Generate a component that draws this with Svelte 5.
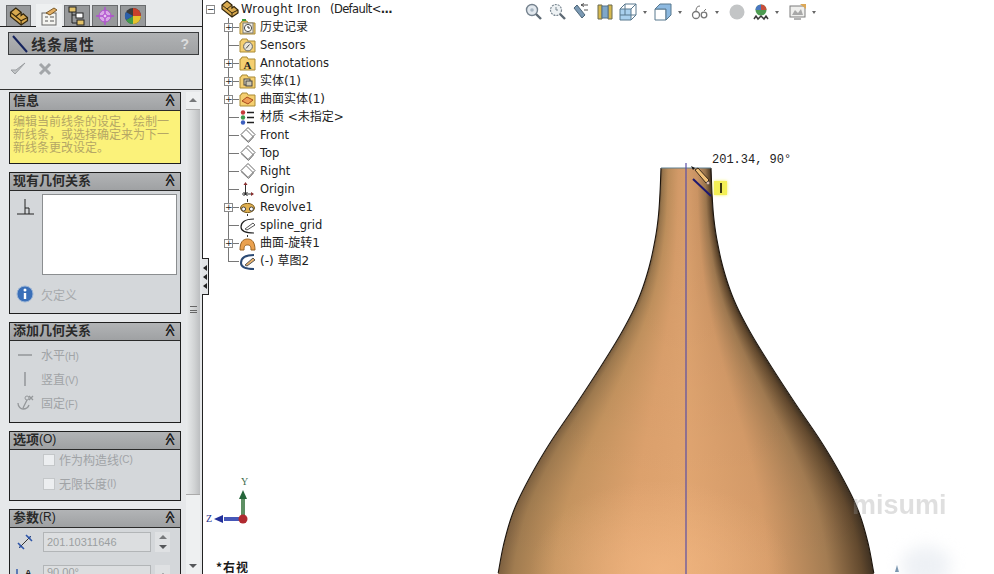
<script>
	// half width of the vase at a given height, read off the part
	const profile = [
		[168, 25], [193, 26], [217, 27.7], [240, 31], [270, 37.7], [300, 48], [330, 63],
		[363, 83], [403, 109], [443, 136], [477, 156], [510, 172], [543, 182], [574, 188]
	];

	function slope(i) {
		const a = profile[Math.max(i - 1, 0)];
		const b = profile[Math.min(i + 1, profile.length - 1)];
		return (b[1] - a[1]) / (b[0] - a[0]);
	}

	// hermite curve through the points so the outline stays smooth
	function halfWidth(y) {
		for (let i = 1; i < profile.length; i++) {
			const [y0, w0] = profile[i - 1];
			const [y1, w1] = profile[i];
			if (y <= y1) {
				const h = y1 - y0;
				const t = (y - y0) / h;
				const t2 = t * t;
				const t3 = t2 * t;
				return (
					(2 * t3 - 3 * t2 + 1) * w0 +
					(t3 - 2 * t2 + t) * h * slope(i - 1) +
					(-2 * t3 + 3 * t2) * w1 +
					(t3 - t2) * h * slope(i)
				);
			}
		}
		return 188;
	}

	const rows = [];
	for (let y = 168; y < 574; y++) rows.push({ y, w: halfWidth(y) });

	const outline = rows.map((r) => `${686 - r.w},${r.y}`).join(' ');
	const outlineRight = rows.map((r) => `${686 + r.w},${r.y}`).join(' ');

	const tree = [
		{ label: '历史记录', icon: 'history', open: true, cjk: true },
		{ label: 'Sensors', icon: 'sensors' },
		{ label: 'Annotations', icon: 'notes', open: true },
		{ label: '实体(1)', icon: 'solid', open: true, cjk: true },
		{ label: '曲面实体(1)', icon: 'surface', open: true, cjk: true },
		{ label: '材质 <未指定>', icon: 'material', cjk: true },
		{ label: 'Front', icon: 'plane' },
		{ label: 'Top', icon: 'plane' },
		{ label: 'Right', icon: 'plane' },
		{ label: 'Origin', icon: 'origin' },
		{ label: 'Revolve1', icon: 'revolve', open: true },
		{ label: 'spline_grid', icon: 'sketch' },
		{ label: '曲面-旋转1', icon: 'dome', open: true, cjk: true },
		{ label: '(-) 草图2', icon: 'sketch2', cjk: true }
	];
</script>

{#snippet folder()}
	<path d="M1 15V4h1l1-2h5l1 2h7v11z" fill="#f5cf70" stroke="#a98a35" />
{/snippet}

{#snippet partIcon()}
	<path d="M1 5l5-4 5 4v3l2-1.500 4 3.500v3l-6 4L1 9z" fill="#d8a94e" stroke="#33260c" stroke-width="1.200" />
	<path d="M1 5l10 8v4M11 13l6-3M6 9l5-4" fill="none" stroke="#33260c" />
{/snippet}

{#snippet treeIcon(kind)}
	<svg class="ticon" width="17" height="17" viewBox="0 0 17 17">
		{#if kind === 'history'}
			{@render folder()}
			<rect x="4" y="4" width="10" height="10" fill="#f8f4e6" stroke="#777" />
			<circle cx="9" cy="9" r="3.6" fill="#fff" stroke="#4c4c4c" />
			<path d="M9 7v2h2" fill="none" stroke="#333" />
			<path d="M3 1h4" stroke="#3e9a3e" stroke-width="2" />
		{:else if kind === 'sensors'}
			{@render folder()}
			<circle cx="9" cy="9.5" r="4.4" fill="#e9e6da" stroke="#666" />
			<path d="M7 11.5l3.5-4" stroke="#444" />
		{:else if kind === 'notes'}
			{@render folder()}
			<text x="4.4" y="13.6" class="glyph-a">A</text>
		{:else if kind === 'solid'}
			{@render folder()}
			<rect x="5" y="6" width="6" height="6" fill="#e4ddc4" stroke="#444" />
			<rect x="7" y="8" width="6" height="5" fill="#cfc8b0" stroke="#444" />
		{:else if kind === 'surface'}
			{@render folder()}
			<path d="M3 10l5-4 6 3-5 4z" fill="#ef9d55" stroke="#a6491d" />
		{:else if kind === 'material'}
			<circle cx="4" cy="3.5" r="2.2" fill="#c53a3a" />
			<circle cx="4" cy="8.5" r="2.2" fill="#3d9a4d" />
			<circle cx="4" cy="13.5" r="2.2" fill="#3c5fbf" />
			<path d="M8 3.5h7M8 8.5h7M8 13.5h7" stroke="#222" stroke-width="1.4" />
		{:else if kind === 'plane'}
			<path d="M9 .5l7 7-7 7-7-7z" fill="#fff" stroke="#666" />
			<path d="M7.500 3l7 7-5 5.500-7.500-7" fill="none" stroke="#777" />
		{:else if kind === 'origin'}
			<path d="M6.5 2v12" stroke="#333" />
			<path d="M6.5 1l-2 3h4z" fill="#8a3030" />
			<path d="M3 13h11" stroke="#333" />
			<path d="M15 13l-3-2v4z" fill="#8a3030" />
			<path d="M4.5 11l4 4M8.5 11l-4 4" stroke="#222" />
		{:else if kind === 'revolve'}
			<path d="M8.5 0v17" stroke="#333" stroke-dasharray="3 2" />
			<ellipse cx="8.5" cy="9" rx="7" ry="4.6" fill="#e0b050" stroke="#7a5a1a" />
			<circle cx="4.6" cy="10" r="2" fill="#fff" stroke="#444" />
			<circle cx="12.4" cy="10" r="2" fill="#fff" stroke="#444" />
		{:else if kind === 'sketch'}
			<path d="M15 2C5 2 2 6 2 10s3 6 13 6" fill="none" stroke="#222" stroke-width="1.2" />
			<path d="M6 12l8-6 2 2-8 5z" fill="#fff" stroke="#555" />
		{:else if kind === 'dome'}
			<path d="M8.5 0v3" stroke="#333" stroke-dasharray="2 1" />
			<path d="M1 15c0-8 3-11 7.500-11S16 7 16 15h-4c0-4-1-5-3.500-5S5 11 5 15z" fill="#eaa14f" stroke="#9a6322" />
		{:else if kind === 'sketch2'}
			<path d="M15 2C5 2 2 6 2 10s3 6 13 6" fill="none" stroke="#2b4a74" stroke-width="2" />
			<path d="M6 12l8-7 2 2-8 6z" fill="#e9b26a" stroke="#555" />
		{/if}
	</svg>
{/snippet}

<div class="app">
	<aside class="panel">
		<div class="tabs">
			<div class="tab">
				<svg width="20" height="19" viewBox="0 0 18 18">{@render partIcon()}</svg>
			</div>
			<div class="tab active">
				<svg width="22" height="20" viewBox="0 0 22 20">
					<rect x="4" y="7" width="14" height="12" fill="#f4f4f0" stroke="#666" />
					<path d="M7 11h3M12 11h4M7 15h3M12 15h4" stroke="#555" />
					<path d="M8 7l8-5 3 2-7 5z" fill="#e2ae62" stroke="#7a5a2a" />
				</svg>
			</div>
			<div class="tab">
				<svg width="22" height="20" viewBox="0 0 22 20">
					<path d="M6 3v14h6M6 9h6" fill="none" stroke="#222" />
					<rect x="3" y="1" width="7" height="5" fill="#e2c26a" stroke="#222" />
					<rect x="10" y="7" width="7" height="5" fill="#fff" stroke="#222" />
					<rect x="11" y="14" width="7" height="5" fill="#e2c26a" stroke="#222" />
				</svg>
			</div>
			<div class="tab">
				<svg width="20" height="20" viewBox="0 0 20 20">
					<circle cx="10" cy="10" r="6" fill="#d9a9e6" stroke="#b04fd0" />
					<path d="M10 1v18M1 10h18" stroke="#b04fd0" stroke-width="1.4" />
					<circle cx="10" cy="10" r="2" fill="#e9c9f0" stroke="#b04fd0" />
				</svg>
			</div>
			<div class="tab">
				<svg width="20" height="20" viewBox="0 0 20 20">
					<circle cx="10" cy="10" r="8" fill="#3a3a3a" />
					<path d="M10 10V2a8 8 0 0 1 8 8z" fill="#c8402a" />
					<path d="M10 10h8a8 8 0 0 1-8 8z" fill="#e6c22c" />
					<path d="M10 10v8a8 8 0 0 1-7-4z" fill="#3f9a4a" />
					<path d="M10 10L3 14a8 8 0 0 1 0-8z" fill="#2c5fa8" />
				</svg>
			</div>
		</div>

		<div class="title">
			<svg width="18" height="20" viewBox="0 0 18 20"><path d="M2 2l14 16" stroke="#16245e" stroke-width="2" /></svg>
			<h1>线条属性</h1>
			<span class="help">?</span>
		</div>

		<div class="actions">
			<svg width="16" height="14" viewBox="0 0 16 14"><path d="M1 8l4 4 10-11-9 7z" fill="#c2c5c7" stroke="#9b9ea1" /></svg>
			<svg width="14" height="14" viewBox="0 0 14 14"><path d="M2 2l10 10M12 2L2 12" stroke="#a3a6a9" stroke-width="3" /></svg>
		</div>

		<div class="scroller">
			<div class="groups">
				<section class="group">
					<header>信息<span class="fold">≪</span></header>
					<p class="note">编辑当前线条的设定，绘制一新线条，或选择确定来为下一新线条更改设定。</p>
				</section>

				<section class="group">
					<header>现有几何关系<span class="fold">≪</span></header>
					<div class="body relations">
						<div class="rel-top">
							<svg width="18" height="18" viewBox="0 0 18 18"><path d="M1 16h17M9 1v15M9 10h4v6" fill="none" stroke="#222" /></svg>
							<div class="listbox"></div>
						</div>
						<div class="status">
							<svg width="18" height="18" viewBox="0 0 18 18">
								<circle cx="9" cy="9" r="8" fill="#3a6fb8" stroke="#9db6d6" />
								<circle cx="9" cy="5" r="1.500" fill="#fff" />
								<path d="M9 8v6" stroke="#fff" stroke-width="2.400" />
							</svg>
							<span>欠定义</span>
						</div>
					</div>
				</section>

				<section class="group">
					<header>添加几何关系<span class="fold">≪</span></header>
					<div class="body add">
						<div class="cmd">
							<svg width="18" height="18" viewBox="0 0 18 18"><path d="M2 9h14" stroke="#8e9194" stroke-width="1.400" /></svg>
							<span>水平<small>(H)</small></span>
						</div>
						<div class="cmd">
							<svg width="18" height="18" viewBox="0 0 18 18"><path d="M9 2v14" stroke="#8e9194" stroke-width="1.400" /></svg>
							<span>竖直<small>(V)</small></span>
						</div>
						<div class="cmd">
							<svg width="18" height="18" viewBox="0 0 18 18">
								<circle cx="11" cy="4" r="2" fill="none" stroke="#94979a" />
								<path d="M11 6L7 14M2 9c0 4 3 6 5 6s5-1 6-4M13 2l4 4M17 2l-4 4" fill="none" stroke="#94979a" stroke-width="1.300" />
							</svg>
							<span>固定<small>(F)</small></span>
						</div>
					</div>
				</section>

				<section class="group">
					<header>选项<b>(O)</b><span class="fold">≪</span></header>
					<div class="body options">
						<div class="opt"><span class="box"></span>作为构造线<small>(C)</small></div>
						<div class="opt"><span class="box"></span>无限长度<small>(I)</small></div>
					</div>
				</section>

				<section class="group">
					<header>参数<b>(R)</b><span class="fold">≪</span></header>
					<div class="body params">
						<div class="param">
							<svg width="18" height="18" viewBox="0 0 18 18">
								<path d="M3 15L15 3" stroke="#333" />
								<path d="M2 10l6 6M10 2l6 6" stroke="#2d55a8" stroke-width="1.600" />
								<path d="M4 12l-1 3 3-1zM14 6l1-3-3 1z" fill="#2d55a8" />
							</svg>
							<div class="field">201.10311646</div>
							<div class="spin"><i class="up"></i><i class="down"></i></div>
						</div>
						<div class="param">
							<svg width="18" height="18" viewBox="0 0 18 18">
								<path d="M1 3v12M1 9h9" stroke="#2d55a8" stroke-width="1.400" />
								<text x="9" y="10" class="glyph-small">A</text>
							</svg>
							<div class="field">90.00°</div>
							<div class="spin"><i class="up"></i></div>
						</div>
					</div>
				</section>
			</div>

			<div class="scrollbar">
				<i class="up"></i>
				<div class="thumb"><span class="grip"></span></div>
				<i class="down"></i>
			</div>
		</div>
	</aside>

	<div class="handle"><i></i><i></i><i></i></div>

	<main class="view">
		<svg class="part" width="784" height="574" viewBox="210 0 784 574">
			<defs>
				<linearGradient id="shade">
					<stop offset="0" stop-color="#7d6040" />
					<stop offset="0.04" stop-color="#a17c50" />
					<stop offset="0.15" stop-color="#c69560" />
					<stop offset="0.35" stop-color="#dfa36e" />
					<stop offset="0.5" stop-color="#e3a772" />
					<stop offset="0.72" stop-color="#d69c69" />
					<stop offset="0.88" stop-color="#a37c52" />
					<stop offset="0.97" stop-color="#62492e" />
					<stop offset="1" stop-color="#3f3122" />
				</linearGradient>
				<linearGradient id="dim" x1="0" y1="0" x2="0" y2="1">
					<stop offset="0" stop-color="#000" stop-opacity="0.06" />
					<stop offset="1" stop-color="#000" stop-opacity="0" />
				</linearGradient>
				<radialGradient id="glow">
					<stop offset="0" stop-color="#f4b984" stop-opacity="0.7" />
					<stop offset="1" stop-color="#f4b984" stop-opacity="0" />
				</radialGradient>
			</defs>
			{#each rows as r}
				<rect x={686 - r.w} y={r.y} width={r.w * 2} height="1.2" fill="url(#shade)" />
			{/each}
			<polygon points={`${outline} ${[...rows].reverse().map((r) => `${686 + r.w},${r.y}`).join(' ')}`} fill="url(#dim)" />
			<ellipse cx="660" cy="570" rx="130" ry="90" fill="url(#glow)" />
			<polyline points={outline} fill="none" stroke="#1c140c" stroke-width="1.100" />
			<polyline points={outlineRight} fill="none" stroke="#1c140c" stroke-width="1.100" />
			<path d="M661 168h50" stroke="#5d7f90" />
			<path d="M686 163V574" stroke="#5a4fa6" stroke-width="1.200" />
			<path d="M693 179l18 17" stroke="#1d1870" stroke-width="2" />

			<path d="M691 166l4 2-2 2z" fill="#111" />
			<path d="M695 170l3-2 11 12-3 3z" fill="#f0c078" stroke="#3a2a1a" />
			<circle cx="708" cy="183" r="1.500" fill="#f4d0c0" stroke="#555" stroke-width="0.500" />

			<path d="M897 565l-2 7h4z" fill="#5c7f9e" />

			<g class="triad">
				<path d="M243 519V498" stroke="#5d8f63" stroke-width="4" />
				<path d="M243 490l-4 9h8z" fill="#25663a" />
				<path d="M243 519H224" stroke="#4657b8" stroke-width="4" />
				<path d="M214 519l9-4v8z" fill="#23309a" />
				<circle cx="243" cy="519" r="4.500" fill="#b02a30" />
			</g>
		</svg>

		<div class="tree">
			<div class="root">
				<span class="exp">−</span>
				<svg class="ticon" width="18" height="18" viewBox="0 0 18 18">{@render partIcon()}</svg>
				<span class="label">Wrought Iron</span>
				<span class="label rest">(Default&lt;<b>...</b></span>
			</div>
			<ul>
				{#each tree as item, i}
					<li class:last={i === tree.length - 1}>
						{#if item.open}<span class="exp">+</span>{:else}<span class="exp none"></span>{/if}
						{@render treeIcon(item.icon)}
						<span class="label" class:cjk={item.cjk}>{item.label}</span>
					</li>
				{/each}
			</ul>
		</div>

		<nav class="toolbar">
			<svg width="18" height="18" viewBox="0 0 18 18"><circle cx="7" cy="7" r="5.500" fill="#e2e8ee" stroke="#75828e" stroke-width="1.400" /><circle cx="7" cy="7" r="1.800" fill="#a8b6c2" /><path d="M11 11l5 5" stroke="#5e6a74" stroke-width="2.400" /></svg>
			<svg width="18" height="18" viewBox="0 0 18 18"><circle cx="7" cy="7" r="5.500" fill="#eef2f4" stroke="#7b8892" stroke-width="1.200" stroke-dasharray="2 1" /><path d="M7 4v3h2" stroke="#7b8892" fill="none" /><path d="M11 11l5 5" stroke="#5e6a74" stroke-width="2.400" /></svg>
			<svg width="18" height="18" viewBox="0 0 18 18"><path d="M2 5l8 10 3-3L5 2z" fill="#7b99b3" stroke="#4d6678" /><path d="M9 2h7M9 2l3-1.500M9 2l3 1.500" stroke="#555" fill="none" /><path d="M12 7h4" stroke="#555" /></svg>
			<svg width="18" height="18" viewBox="0 0 18 18"><path d="M2 2h4v14H2zM12 2h4v14h-4z" fill="#d7b94e" stroke="#6a6a50" /><path d="M6 3h6v12H6z" fill="#7fa7c9" stroke="#55738c" /></svg>
			<svg width="18" height="18" viewBox="0 0 18 18"><path d="M1 6h11v11H1z" fill="#a9d0ee" stroke="#58788e" /><path d="M1 6l5-5h11v11l-5 5M12 6l5-5M6 1v11H1M6 12h11" fill="none" stroke="#58788e" /></svg>
			<i class="caret"></i>
			<svg class="nudge" width="18" height="18" viewBox="0 0 18 18"><path d="M1 6h11v11H1z" fill="#fff" stroke="#58788e" /><path d="M1 6l5-5h11v11l-5 5V6z" fill="#8db9e0" stroke="#58788e" /></svg>
			<i class="caret"></i>
			<svg class="push" width="18" height="18" viewBox="0 0 18 18"><circle cx="5" cy="12" r="3.500" fill="none" stroke="#777" stroke-width="1.300" /><circle cx="13" cy="12" r="2.800" fill="none" stroke="#777" stroke-width="1.300" /><path d="M5 8c0-3 1-5 4-5M13 8l2-2" fill="none" stroke="#777" /></svg>
			<i class="caret"></i>
			<svg class="push" width="18" height="18" viewBox="0 0 18 18"><circle cx="9" cy="9" r="7.500" fill="#c3c5c6" /></svg>
			<svg width="18" height="18" viewBox="0 0 18 18"><circle cx="9" cy="7" r="5.500" fill="#4d9c52" /><path d="M9 7V1.500A5.500 5.500 0 0 1 14.500 7z" fill="#c84e3a" /><path d="M9 7H3.500A5.500 5.500 0 0 1 9 1.500z" fill="#4a77c0" /><path d="M2 16l2-3 2 3 3-3 3 3 2-3 2 3" fill="none" stroke="#3a3a3a" stroke-width="1.500" /></svg>
			<i class="caret"></i>
			<svg class="push" width="18" height="18" viewBox="0 0 18 18"><rect x="1" y="3" width="15" height="11" fill="#efefed" stroke="#7c7c7c" /><path d="M3 12l3-5 3 3 3-4 2 6z" fill="#a8a8a8" /><path d="M11 1h6v5z" fill="#dda856" /><path d="M5 16h7" stroke="#666" /></svg>
			<i class="caret"></i>
		</nav>

		<div class="readout">201.34, 90°</div>
		<div class="cursor-tag"><span></span></div>
		<span class="axis-y">Y</span>
		<span class="axis-z">Z</span>
		<div class="viewname">*右视</div>
		<div class="mark">misumi</div>
		<div class="smudge"></div>
	</main>
</div>

<style>
	:global(body) {
		margin: 0;
		background: #fff;
	}

	.app {
		display: flex;
		width: 994px;
		height: 574px;
		overflow: hidden;
		font-family: "Noto Sans CJK SC", "Noto Sans", sans-serif;
	}

	.panel {
		width: 202px;
		flex: none;
		height: 574px;
		overflow: hidden;
		background: #e6e8ea;
		border-right: 1px solid #222;
	}

	.tabs {
		display: flex;
		align-items: flex-end;
		gap: 2px;
		height: 26px;
		padding-left: 6px;
		border-bottom: 1px solid #222;
		box-sizing: content-box;
	}

	.tab {
		width: 26px;
		height: 21px;
		background: #97999b;
		border: 1px solid #6a6c6e;
		border-bottom: none;
		box-sizing: border-box;
		display: flex;
		align-items: center;
		justify-content: center;
		margin-right: 0;
	}

	.tab:first-child {
		width: 25px;
		margin-right: 3px;
	}

	.tab.active {
		height: 23px;
		background: #eef0f1;
		border-color: #eef0f1;
		margin-bottom: -1px;
	}

	.title {
		display: flex;
		align-items: center;
		gap: 2px;
		height: 21px;
		margin: 5px 3px 0 8px;
		padding: 0 9px 0 2px;
		background: linear-gradient(#b0b2b4, #a0a2a4);
		border: 1px solid #3a3c3e;
	}

	.title h1 {
		margin: 0;
		font-size: 15px;
		font-weight: 700;
		letter-spacing: 1px;
		color: #2c2c2c;
		flex: 1;
	}

	.help {
		font: 700 14px "Liberation Sans", sans-serif;
		color: #dcdddd;
	}

	.actions {
		display: flex;
		align-items: flex-start;
		gap: 12px;
		height: 35px;
		box-sizing: border-box;
		padding: 7px 0 0 10px;
		border-bottom: 1px solid #333;
	}

	.scroller {
		display: flex;
		padding: 2px 1px 0 9px;
		gap: 5px;
	}

	.groups {
		width: 172px;
		flex: none;
		display: flex;
		flex-direction: column;
		gap: 8px;
	}

	.group {
		border: 1px solid #1e1e1e;
		background: #d4d7da;
	}

	.group header {
		display: flex;
		align-items: center;
		height: 18px;
		box-sizing: border-box;
		padding: 0 0 3px 3px;
		background: linear-gradient(#b2b4b6, #9fa1a3);
		border-bottom: 1px solid #2a2a2a;
		font-size: 13px;
		font-weight: 700;
		line-height: 14px;
		color: #2a2a2a;
	}

	.group header b {
		font: 400 12px "Liberation Sans", sans-serif;
		color: #222;
	}

	.fold {
		margin-left: auto;
		margin-right: 3px;
		transform: rotate(90deg);
		font: 700 13px "DejaVu Sans", sans-serif;
		line-height: 12px;
		color: #1c1c1c;
	}

	.note {
		margin: 0;
		height: 52px;
		box-sizing: border-box;
		padding: 3px 3px 0 3px;
		background: #fbf27a;
		font-size: 12px;
		line-height: 13px;
		color: #b5a765;
	}

	.relations {
		height: 122px;
		padding: 3px 3px 0 3px;
		box-sizing: border-box;
	}

	.rel-top {
		display: flex;
		justify-content: space-between;
		align-items: flex-start;
	}

	.rel-top svg {
		margin: 4px 0 0 3px;
	}

	.listbox {
		width: 133px;
		height: 79px;
		background: #fff;
		border: 1px solid #8b8e90;
	}

	.status {
		display: flex;
		align-items: center;
		gap: 7px;
		margin: 10px 0 0 3px;
		font-size: 12px;
		color: #a6a9ac;
	}

	.add {
		height: 81px;
		box-sizing: border-box;
		padding: 5px 0 0 6px;
		display: flex;
		flex-direction: column;
		gap: 6px;
	}

	.cmd {
		display: flex;
		align-items: center;
		gap: 7px;
		height: 18px;
		font-size: 12px;
		color: #a0a3a6;
	}

	.cmd span {
		margin-top: -2px;
	}

	small {
		font: 400 10px "Liberation Sans", sans-serif;
	}

	.options {
		height: 50px;
		box-sizing: border-box;
		padding: 0 0 0 33px;
		display: flex;
		flex-direction: column;
		gap: 5px;
	}

	.opt {
		display: flex;
		align-items: center;
		height: 19px;
		font-size: 12px;
		color: #a0a3a6;
	}

	.box {
		width: 10px;
		height: 10px;
		margin-right: 4px;
		background: #eceef0;
		border: 1px solid #c4c7c9;
	}

	.params {
		padding: 4px 0 0 6px;
		height: 70px;
		box-sizing: border-box;
	}

	.param {
		display: flex;
		align-items: center;
		height: 20px;
		margin-bottom: 13px;
		gap: 9px;
	}

	.param svg {
		flex: none;
	}

	.field {
		width: 108px;
		height: 20px;
		box-sizing: border-box;
		padding-left: 3px;
		background: #dcdee0;
		border: 1px solid #b2b5b7;
		font: 400 11px/18px "Liberation Sans", sans-serif;
		color: #9b9ea1;
	}

	.param + .param .field {
		line-height: 12px;
	}

	.spin {
		display: flex;
		flex-direction: column;
		align-items: center;
		justify-content: space-around;
		width: 15px;
		height: 20px;
		margin-left: -5px;
		background: #dfe1e3;
	}

	i.up,
	i.down {
		display: block;
		width: 0;
		height: 0;
		border-left: 4px solid transparent;
		border-right: 4px solid transparent;
	}

	i.up {
		border-bottom: 4px solid #77797b;
	}

	i.down {
		border-top: 4px solid #55575a;
	}

	.scrollbar {
		width: 14px;
		height: 482px;
		display: flex;
		flex-direction: column;
		align-items: center;
		background: #eef0f1;
	}

	.scrollbar i.up {
		margin: 6px 0 7px;
	}

	.scrollbar i.down {
		margin-top: 69px;
	}

	.thumb {
		width: 14px;
		height: 386px;
		flex: none;
		background: linear-gradient(90deg, #e9ebec, #d1d3d4 60%, #bcbec0);
		border-top: 1px solid #aaa;
		border-bottom: 1px solid #aaa;
		box-sizing: border-box;
		display: flex;
		align-items: center;
		justify-content: center;
	}

	.grip {
		width: 7px;
		height: 7px;
		border-top: 1px solid #666;
		border-bottom: 1px solid #666;
		background: linear-gradient(#0000 3px, #666 3px, #666 4px, #0000 4px);
		margin-top: 14px;
		box-sizing: border-box;
	}

	.handle {
		width: 7px;
		height: 37px;
		margin-top: 258px;
		flex: none;
		display: flex;
		flex-direction: column;
		align-items: center;
		justify-content: center;
		gap: 3px;
		background: #e2e4e6;
		border-top: 1px solid #222;
		border-bottom: 1px solid #222;
		border-right: 1px solid #222;
		margin-left: -1px;
		box-sizing: border-box;
		z-index: 2;
	}

	.handle i {
		display: block;
		width: 0;
		height: 0;
		border-top: 3px solid transparent;
		border-bottom: 3px solid transparent;
		border-right: 4px solid #222;
	}

	.view {
		position: relative;
		flex: 1;
		display: flex;
		align-items: flex-start;
		height: 574px;
		background: #fff;
		margin-left: -4px;
		padding-left: 4px;
	}

	.part {
		position: absolute;
		top: 0;
		right: 0;
	}

	.tree {
		position: relative;
		width: 319px;
		flex: none;
		margin-left: -3px;
		font: 400 11.5px "DejaVu Sans", "Noto Sans CJK SC", sans-serif;
		color: #222;
	}

	.root,
	.tree li {
		display: flex;
		align-items: center;
		height: 18px;
		white-space: pre;
	}

	.root {
		gap: 6px;
	}

	.root .label {
		margin-left: -4px;
		letter-spacing: 0.45px;
	}

	.root .rest {
		margin-left: 3px;
		letter-spacing: -0.6px;
	}

	.label {
		line-height: 18px;
	}

	.label.cjk {
		font-size: 12px;
	}

	.tree ul {
		list-style: none;
		margin: 0;
		padding: 0 0 0 19px;
	}

	.tree li {
		position: relative;
		gap: 0;
	}

	.tree li::before {
		content: "";
		position: absolute;
		left: 3px;
		top: 0;
		bottom: 0;
		width: 11px;
		border-left: 1px solid #777;
	}

	.tree li::after {
		content: "";
		position: absolute;
		left: 3px;
		top: 9px;
		width: 11px;
		border-top: 1px solid #777;
	}

	.tree li.last::before {
		bottom: 9px;
	}

	.exp {
		position: relative;
		z-index: 1;
		width: 9px;
		height: 9px;
		flex: none;
		border: 1px solid #8a8a8a;
		background: #fff;
		box-sizing: border-box;
		font: 400 9px/7px "DejaVu Sans", sans-serif;
		text-align: center;
		color: #222;
	}

	.exp.none {
		visibility: hidden;
	}

	.tree li .exp {
		margin-left: -1px;
	}

	.tree li .ticon {
		position: relative;
		z-index: 1;
		margin: 0 4px 0 6px;
		background: #fff;
	}

	.glyph-a {
		font: 700 11px "Liberation Serif", serif;
		fill: #222;
	}

	.glyph-small {
		font: 700 9px "Liberation Sans", sans-serif;
		fill: #222;
	}

	.toolbar {
		position: relative;
		display: flex;
		align-items: center;
		gap: 5.5px;
		height: 24px;
	}

	.toolbar .nudge {
		margin-left: 2px;
	}

	.toolbar .push {
		margin-left: 4px;
	}

	.caret {
		display: block;
		width: 0;
		height: 0;
		border-left: 2.5px solid transparent;
		border-right: 2.500px solid transparent;
		border-top: 3px solid #666;
	}

	.readout {
		position: absolute;
		left: 507px;
		top: 153px;
		font: 400 12px/14px "Liberation Mono", monospace;
		color: #222;
		white-space: pre;
	}

	.cursor-tag {
		position: absolute;
		left: 509px;
		top: 181px;
		width: 13px;
		height: 14px;
		display: flex;
		justify-content: center;
		background: #f3ef55;
		box-shadow: 0 0 3px #f3ef55;
	}

	.cursor-tag span {
		width: 2px;
		height: 10px;
		margin-top: 2px;
		background: #3d3a10;
	}

	.axis-y,
	.axis-z {
		position: absolute;
		font: 400 10px/12px "Liberation Serif", serif;
		color: #3c6a4a;
	}

	.axis-y {
		left: 36px;
		top: 476px;
	}

	.axis-z {
		left: 1px;
		top: 513px;
		color: #26308a;
	}

	.viewname {
		position: absolute;
		left: 11px;
		top: 558px;
		font-size: 12px;
		font-weight: 700;
		line-height: 18px;
		letter-spacing: 1px;
		color: #1a1a1a;
	}

	.mark {
		position: absolute;
		left: 647px;
		top: 489px;
		font: 700 27px/32px "Liberation Sans", sans-serif;
		color: #999;
		opacity: 0.3;
	}

	.smudge {
		position: absolute;
		left: 696px;
		top: 546px;
		width: 50px;
		height: 40px;
		border-radius: 50%;
		background: #eef1f5;
		filter: blur(8px);
	}
</style>
